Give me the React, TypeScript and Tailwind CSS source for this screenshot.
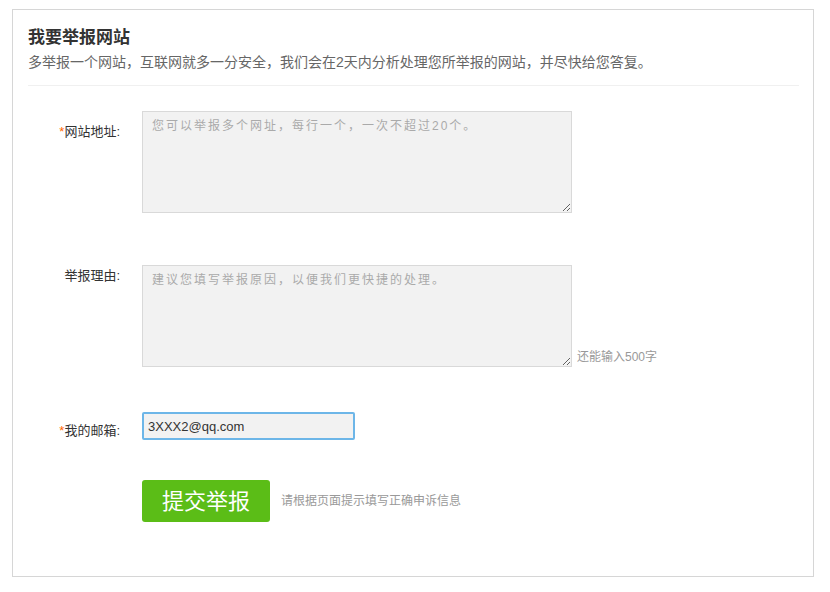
export default function App() {
    const font = { fontFamily: '"Liberation Sans", "Noto Sans CJK SC", sans-serif' };

    return (
        <div className="pt-[9px] pl-[12px] bg-white min-h-[592px]" style={font}>
            <div className="w-[802px] h-[568px] border border-[#d6d6d6] pt-[17px] pl-[15px] pr-[14px]">
                <h1 className="text-[17px] leading-[22px] font-bold text-[#333]">我要举报网站</h1>
                <p className="mt-[3px] text-[14px] leading-[20px] text-[#666]">
                    多举报一个网站，互联网就多一分安全，我们会在2天内分析处理您所举报的网站，并尽快给您答复。
                </p>
                <div className="mt-[13px] h-px bg-[#f0f0f0]" />

                <div className="mt-[25px] flex">
                    <label className="w-[92px] pt-[12px] text-right text-[13px] leading-[17px] text-[#333]">
                        <span className="text-[#f60]">*</span>网站地址:
                    </label>
                    <textarea
                        className="ml-[22px] w-[430px] h-[102px] border border-[#d9d9d9] bg-[#f2f2f2] px-[9px] py-[5px] text-[12px] leading-[18px] tracking-[2px] text-[#333] placeholder:text-[#aaa] outline-none"
                        placeholder="您可以举报多个网址，每行一个，一次不超过20个。"
                    />
                </div>

                <div className="mt-[52px] flex">
                    <label className="w-[92px] pt-[2px] text-right text-[13px] leading-[17px] text-[#333]">
                        举报理由:
                    </label>
                    <textarea
                        className="ml-[22px] w-[430px] h-[102px] border border-[#d9d9d9] bg-[#f2f2f2] px-[9px] py-[5px] text-[12px] leading-[18px] tracking-[2px] text-[#333] placeholder:text-[#aaa] outline-none"
                        placeholder="建议您填写举报原因，以便我们更快捷的处理。"
                    />
                    <span className="self-end mb-[2px] ml-[5px] text-[12px] leading-[16px] text-[#999]">还能输入500字</span>
                </div>

                <div className="mt-[45px] flex">
                    <label className="w-[92px] pt-[10px] text-right text-[13px] leading-[17px] text-[#333]">
                        <span className="text-[#f60]">*</span>我的邮箱:
                    </label>
                    <input
                        className="ml-[22px] w-[213px] h-[28px] border-2 border-[#6db6e8] rounded-[2px] bg-[#f2f2f2] px-[4px] text-[13px] text-[#333] outline-none"
                        defaultValue="3XXX2@qq.com"
                    />
                </div>

                <div className="mt-[40px] flex items-center pl-[114px]">
                    <button className="w-[128px] h-[42px] rounded-[3px] bg-[#5bbd17] text-[22px] text-white">提交举报</button>
                    <span className="ml-[11px] text-[12px] text-[#999]">请根据页面提示填写正确申诉信息</span>
                </div>
            </div>
        </div>
    );
}
